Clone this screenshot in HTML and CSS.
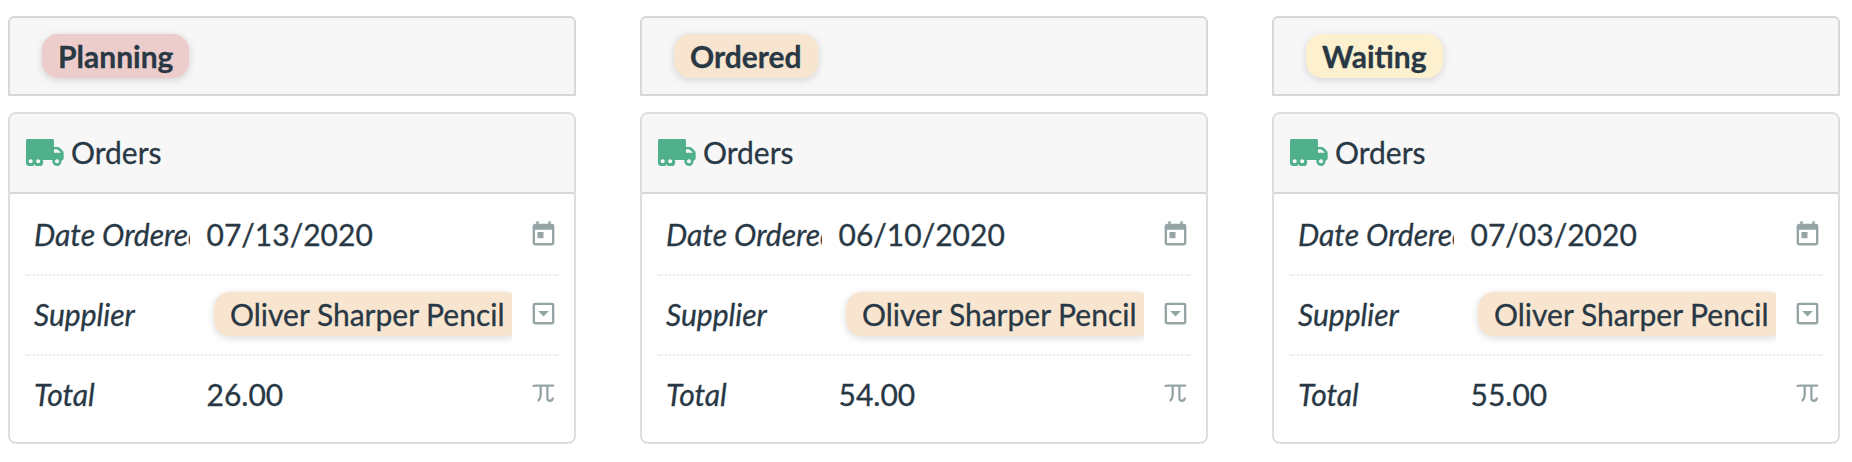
FILE: index.html
```html
<!DOCTYPE html>
<html lang="en">
<head>
    <meta charset="utf-8">
    <title>Orders</title>
    <link rel="stylesheet" href="styles.css">
</head>
<body>
    <!-- shared icons -->
    <svg class="sprite">
        <symbol id="truck" viewBox="0 0 38 27">
            <path fill-rule="evenodd" d="M1.5 0H26.5Q28 0 28 1.5V8H31.5Q33 8 34 9L36.500 11.500Q37.700 12.700 37.700 14.500V19Q37.700 21.300 35.500 21.700A4.600 4.600 0 1 1 26.600 21H16.700A4.600 4.600 0 0 1 8.500 25.300A4.600 4.600 0 0 1 0 22V1.500Q0 0 1.500 0ZM28 10.300V13.700H35L32 10.900Q31.400 10.300 30.500 10.300ZM4.700 20.300a2 2 0 1 0 .01 0ZM12.200 20.300a2 2 0 1 0 .01 0ZM31 20.300a2 2 0 1 0 .01 0Z"/>
        </symbol>
        <symbol id="calendar" viewBox="0 0 24 24">
            <path d="M7 10h5v5H7m12 4H5V8h14m0-5h-1V1h-2v2H8V1H6v2H5c-1.110 0-2 .890-2 2v14a2 2 0 0 0 2 2h14a2 2 0 0 0 2-2V5a2 2 0 0 0-2-2z"/>
        </symbol>
        <symbol id="dropdown" viewBox="0 0 24 24">
            <path fill-rule="evenodd" d="M5 3h14a2 2 0 0 1 2 2v14a2 2 0 0 1-2 2H5a2 2 0 0 1-2-2V5a2 2 0 0 1 2-2zm0 2v14h14V5zM7.500 10h9L12 14.500z"/>
        </symbol>
        <symbol id="pi" viewBox="0 0 24 24">
            <path fill="none" stroke="currentColor" stroke-width="1.900" d="M3.300 6.300Q3.700 5.400 5 5.400H20.800M9.700 5.400V12Q9.700 16.500 7.300 18.200M15.200 5.400V15.500Q15.200 18 17.300 18Q19.500 18 19.900 15.300"/>
        </symbol>
    </svg>

    <main class="board">
        <section class="column">
            <header class="column-header"><span class="pill pill-red">Planning</span></header>
            <article class="card">
                <div class="card-title"><svg class="truck"><use href="#truck"/></svg>Orders</div>
                <div class="card-body">
                    <div class="field">
                        <span class="label">Date Ordered</span>
                        <span class="value">07/13/2020</span>
                        <svg class="icon"><use href="#calendar"/></svg>
                    </div>
                    <div class="field">
                        <span class="label">Supplier</span>
                        <span class="value value-pill"><span class="pill pill-orange">Oliver Sharper Pencil</span></span>
                        <svg class="icon icon-raised"><use href="#dropdown"/></svg>
                    </div>
                    <div class="field">
                        <span class="label">Total</span>
                        <span class="value">26.00</span>
                        <svg class="icon icon-raised"><use href="#pi"/></svg>
                    </div>
                </div>
            </article>
        </section>

        <section class="column">
            <header class="column-header"><span class="pill pill-orange">Ordered</span></header>
            <article class="card">
                <div class="card-title"><svg class="truck"><use href="#truck"/></svg>Orders</div>
                <div class="card-body">
                    <div class="field">
                        <span class="label">Date Ordered</span>
                        <span class="value">06/10/2020</span>
                        <svg class="icon"><use href="#calendar"/></svg>
                    </div>
                    <div class="field">
                        <span class="label">Supplier</span>
                        <span class="value value-pill"><span class="pill pill-orange">Oliver Sharper Pencil</span></span>
                        <svg class="icon icon-raised"><use href="#dropdown"/></svg>
                    </div>
                    <div class="field">
                        <span class="label">Total</span>
                        <span class="value">54.00</span>
                        <svg class="icon icon-raised"><use href="#pi"/></svg>
                    </div>
                </div>
            </article>
        </section>

        <section class="column">
            <header class="column-header"><span class="pill pill-yellow">Waiting</span></header>
            <article class="card">
                <div class="card-title"><svg class="truck"><use href="#truck"/></svg>Orders</div>
                <div class="card-body">
                    <div class="field">
                        <span class="label">Date Ordered</span>
                        <span class="value">07/03/2020</span>
                        <svg class="icon"><use href="#calendar"/></svg>
                    </div>
                    <div class="field">
                        <span class="label">Supplier</span>
                        <span class="value value-pill"><span class="pill pill-orange">Oliver Sharper Pencil</span></span>
                        <svg class="icon icon-raised"><use href="#dropdown"/></svg>
                    </div>
                    <div class="field">
                        <span class="label">Total</span>
                        <span class="value">55.00</span>
                        <svg class="icon icon-raised"><use href="#pi"/></svg>
                    </div>
                </div>
            </article>
        </section>
    </main>
</body>
</html>
```
FILE: styles.css
```css
* {
    box-sizing: border-box;
}

body {
    margin: 0;
    background: #fff;
    color: #293845;
    font-family: Lato, sans-serif;
    font-size: 30px;
    line-height: 44px;
    -webkit-text-stroke: 0.3px #293845;
}

.sprite {
    display: none;
}

.board {
    display: flex;
    gap: 64px;
    padding: 16px 8px;
}

.column {
    flex: none;
    width: 568px;
}

.column-header {
    display: flex;
    align-items: flex-start;
    height: 80px;
    margin-bottom: 16px;
    padding: 16px 32px;
    background: #f7f7f7;
    border: 2px solid #d8d8d8;
    border-radius: 6px 6px 0 0;
    font-weight: 700;
}

.pill {
    flex: none;
    height: 44px;
    padding: 0 16px;
    border-radius: 16px;
    box-shadow: 0 2px 8px rgba(0, 0, 0, 0.15);
    white-space: nowrap;
}

.pill-red { background: #edcdcc; }
.pill-orange { background: #f8e5d0; }
.pill-yellow { background: #fcf0ce; }

/* Cards */
.card {
    height: 332px;
    background: #fff;
    border: 2px solid #dedede;
    border-radius: 8px;
    overflow: hidden;
}

.card-title {
    display: flex;
    align-items: center;
    height: 80px;
    padding: 0 16px 2px;
    background: #f7f7f7;
    border-bottom: 2px solid #d8d8d8;
}

.truck {
    width: 38px;
    height: 27px;
    margin-right: 7px;
    fill: #50b08c;
}

.card-body {
    padding: 2px 16px 0;
}

.field {
    display: flex;
    align-items: center;
    height: 80px;
    padding: 0 0 2px 8px;
    border-bottom: 2px dotted #ececec;
}

.field:last-child {
    border-bottom-color: transparent;
}

.label {
    width: 156px;
    margin-right: 16px;
    font-style: italic;
    white-space: nowrap;
    overflow: hidden;
}

.value {
    display: flex;
    align-items: center;
    width: 306px;
    height: 76px;
    padding-left: 0.5px;
    overflow: hidden;
}

.value-pill {
    padding-left: 8px;
}

.icon {
    width: 29px;
    height: 29px;
    margin-left: 16.5px;
    color: #95a5a6;
    fill: #95a5a6;
}

.icon-raised {
    margin-bottom: 2px;
}
```
